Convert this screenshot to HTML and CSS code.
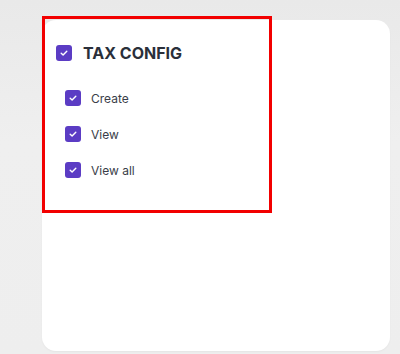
FILE: index.html
```html
<!DOCTYPE html>
<html>
<head>
<meta charset="utf-8">
<link rel="stylesheet" href="styles.css">
</head>
<body>
<div class="card">
  <div class="group">
    <div class="row head">
      <span class="cb"><svg viewBox="0 0 16 16" width="16" height="16"><path d="M5.2 8.3 L7.1 10.1 L10.8 6.2" fill="none" stroke="#fff" stroke-width="1.4" stroke-linecap="round" stroke-linejoin="round"/></svg></span>
      <span class="title">TAX CONFIG</span>
    </div>
    <div class="items">
      <div class="row">
        <span class="cb"><svg viewBox="0 0 16 16" width="16" height="16"><path d="M5.2 8.3 L7.1 10.1 L10.8 6.2" fill="none" stroke="#fff" stroke-width="1.4" stroke-linecap="round" stroke-linejoin="round"/></svg></span>
        <span class="label">Create</span>
      </div>
      <div class="row">
        <span class="cb"><svg viewBox="0 0 16 16" width="16" height="16"><path d="M5.2 8.3 L7.1 10.1 L10.8 6.2" fill="none" stroke="#fff" stroke-width="1.4" stroke-linecap="round" stroke-linejoin="round"/></svg></span>
        <span class="label">View</span>
      </div>
      <div class="row">
        <span class="cb"><svg viewBox="0 0 16 16" width="16" height="16"><path d="M5.2 8.3 L7.1 10.1 L10.8 6.2" fill="none" stroke="#fff" stroke-width="1.4" stroke-linecap="round" stroke-linejoin="round"/></svg></span>
        <span class="label">View all</span>
      </div>
    </div>
  </div>
</div>
<div class="highlight"></div>
</body>
</html>
```
FILE: styles.css
```css
html, body {
  margin: 0;
  padding: 0;
}
body {
  width: 400px;
  height: 354px;
  background: linear-gradient(#e9e9e9, #efefef 40%, #eeeeee);
  font-family: Inter, "Noto Sans", sans-serif;
  position: relative;
  overflow: hidden;
}
.card {
  margin: 20px 0 0 42px;
  width: 348px;
  height: 331px;
  background: #fff;
  border-radius: 14px;
  box-sizing: border-box;
  padding: 25px 0 0 14px;
  box-shadow: 0 1px 2px rgba(0,0,0,0.04);
}
.group {
  display: flex;
  flex-direction: column;
}
.row {
  display: flex;
  align-items: center;
  height: 16px;
}
.cb {
  width: 16px;
  height: 16px;
  background: #5b3cc4;
  border-radius: 3px;
  flex: none;
  display: flex;
}
.head .title {
  margin-left: 11px;
  font-size: 16px;
  font-weight: 700;
  color: #2a2f3a;
  letter-spacing: 0;
}
.items {
  margin-top: 29px;
  padding-left: 9px;
  display: flex;
  flex-direction: column;
  gap: 20px;
}
.label {
  margin-left: 10px;
  font-size: 12px;
  color: #3a3e49;
}
.highlight {
  position: absolute;
  left: 42px;
  top: 16px;
  width: 230px;
  height: 197px;
  box-sizing: border-box;
  border: 3px solid #f20000;
}
```
